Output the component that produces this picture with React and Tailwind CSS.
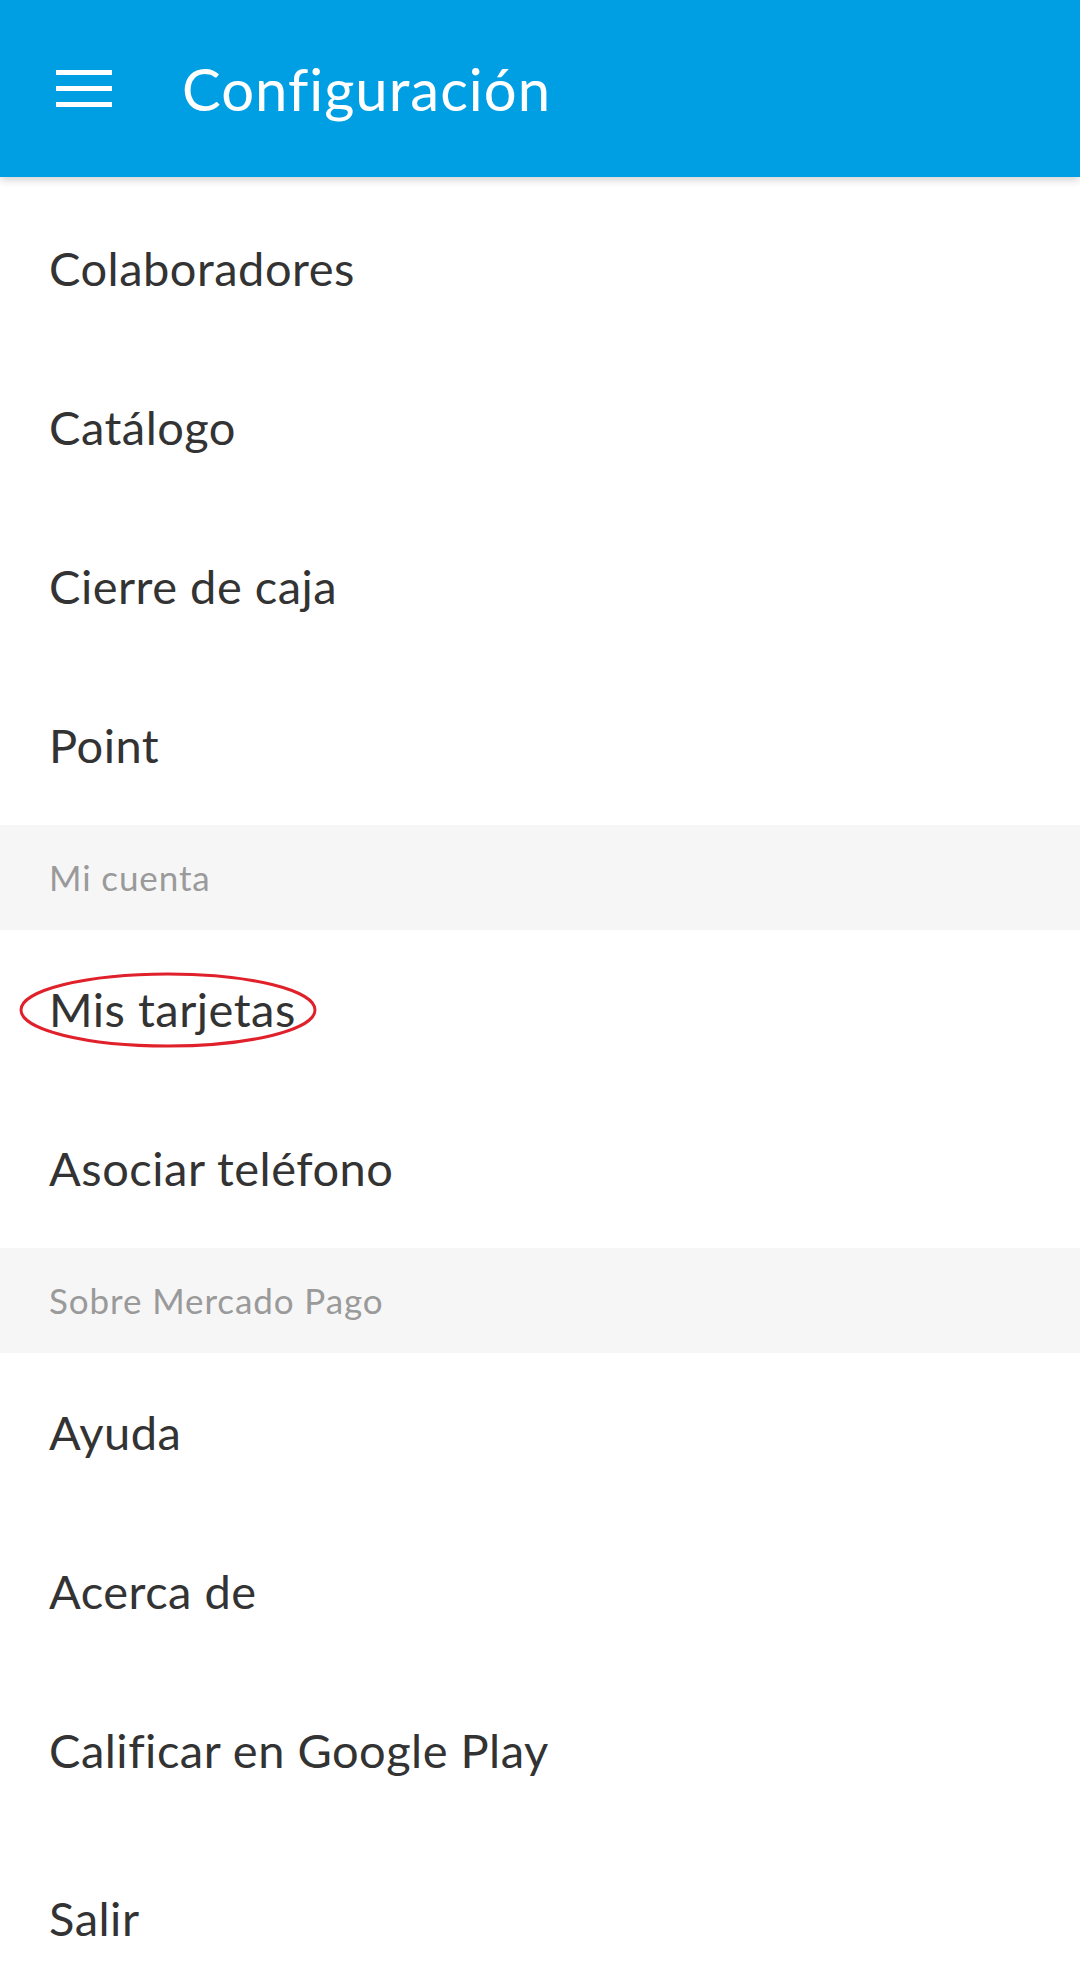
import React from 'react';

const font = { fontFamily: 'Lato, "Open Sans", sans-serif' };

function Row({ label, circled, last }) {
  return (
    <div className={`relative flex items-center px-[49px] ${last ? 'h-[153px] pt-[23px]' : 'h-[159px]'}`}>
      <span className="text-[47px] leading-none tracking-[0.5px] text-[#333333]">{label}</span>
      {circled && (
        <svg
          className="absolute left-[18px] top-[41px] pointer-events-none"
          width="300"
          height="78"
          viewBox="0 0 300 78"
        >
          <ellipse cx="150" cy="39" rx="147" ry="36" fill="none" stroke="#e0202a" strokeWidth="3" />
        </svg>
      )}
    </div>
  );
}

function Section({ title }) {
  return (
    <div className="flex items-center h-[105px] px-[49px] bg-[#f6f6f6]">
      <span className="text-[35px] leading-none tracking-[0.9px] text-[#9a9a9a]">{title}</span>
    </div>
  );
}

export default function App() {
  return (
    <div className="w-[1080px] min-h-[1983px] bg-white overflow-hidden" style={font}>
      <header className="relative z-10 flex items-center h-[177px] bg-[#009fe3] shadow-[0_3px_8px_rgba(0,0,0,0.18)]">
        <div className="flex flex-col gap-[11px] ml-[56px] w-[56px]">
          <span className="block h-[5px] bg-white" />
          <span className="block h-[5px] bg-white" />
          <span className="block h-[5px] bg-white" />
        </div>
        <h1 className="ml-[70px] text-[58px] leading-none tracking-[1px] text-white font-normal">Configuración</h1>
      </header>

      <div className="pt-[12px]">
        <Row label="Colaboradores" />
        <Row label="Catálogo" />
        <Row label="Cierre de caja" />
        <Row label="Point" />
      </div>
      <Section title="Mi cuenta" />
      <Row label="Mis tarjetas" circled />
      <Row label="Asociar teléfono" />
      <Section title="Sobre Mercado Pago" />
      <Row label="Ayuda" />
      <Row label="Acerca de" />
      <Row label="Calificar en Google Play" />
      <Row label="Salir" last />
    </div>
  );
}
